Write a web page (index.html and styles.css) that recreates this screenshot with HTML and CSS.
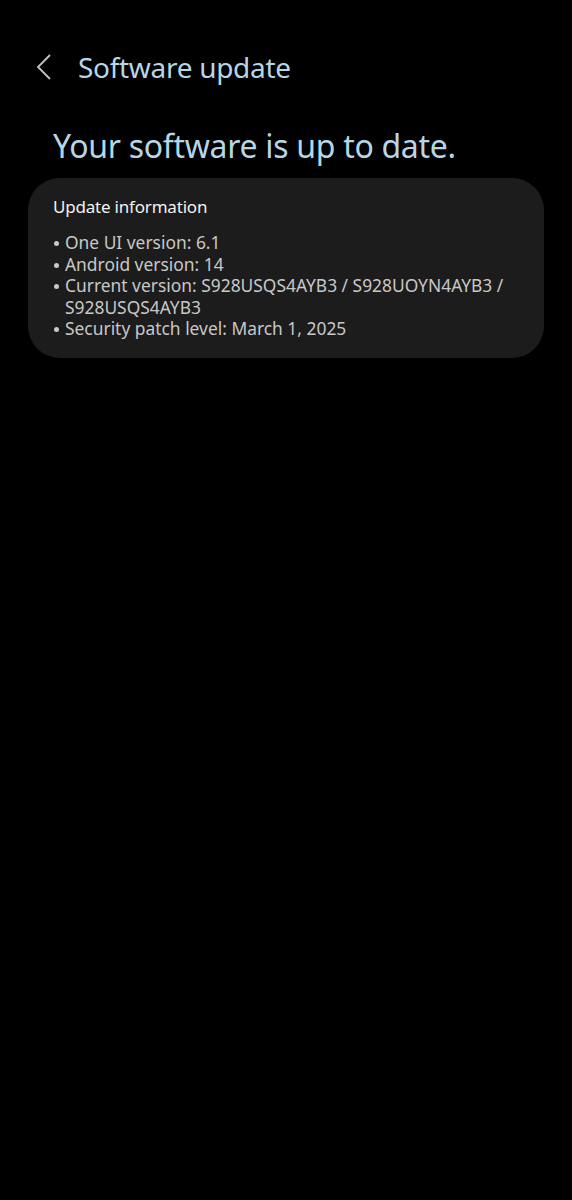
FILE: index.html
```html
<!DOCTYPE html>
<html lang="en">
<head>
  <meta charset="UTF-8">
  <title>Software update</title>
  <link rel="stylesheet" href="styles.css">
</head>
<body>
  <div class="screen">
    <!-- top bar -->
    <div class="topbar">
      <span class="back">
        <svg width="16" height="26" viewBox="0 0 16 26">
          <path d="M14 1 L2 13 L14 25" fill="none" stroke="#c4c4c4" stroke-width="1.8"/>
        </svg>
      </span>
      <h1>Software update</h1>
    </div>

    <h2 class="status">Your software is up to date.</h2>

    <div class="card">
      <h3>Update information</h3>
      <ul>
        <li>One UI version: 6.1</li>
        <li>Android version: 14</li>
        <li>Current version: S928USQS4AYB3 / S928UOYN4AYB3 / S928USQS4AYB3</li>
        <li>Security patch level: March 1, 2025</li>
      </ul>
    </div>
  </div>
</body>
</html>
```

FILE: styles.css
```css
body {
  margin: 0;
  padding: 0;
  background: #000;
  font-family: "Noto Sans", "Open Sans", sans-serif;
}

.screen {
  width: 572px;
  height: 1200px;
  box-sizing: border-box;
  padding: 45px 28px 0 28px;
}

.topbar {
  display: flex;
  align-items: center;
  height: 44px;
}

.back {
  display: flex;
  margin-left: 8px;
  width: 42px;
}

.topbar h1 {
  margin: 0;
  font-size: 28px;
  font-weight: 400;
  color: #b6d6e6;
  letter-spacing: -0.3px;
}

.status {
  margin: 35px 0 0 25px;
  font-size: 32px;
  font-weight: 400;
  color: #b6d6e6;
  letter-spacing: -0.3px;
  line-height: 44px;
}

.card {
  margin-top: 10px;
  background: #1c1c1c;
  border-radius: 32px;
  padding: 17px 25px 18px 25px;
}

.card h3 {
  margin: 0 0 13px 0;
  font-size: 17px;
  font-weight: 400;
  color: #f2f2f2;
  line-height: 24px;
  letter-spacing: -0.2px;
}

.card ul {
  margin: 0;
  padding: 0;
  list-style: none;
}

.card li {
  position: relative;
  padding-left: 12px;
  font-size: 17.4px;
  line-height: 21.5px;
  color: #c8c8c8;
}

.card li::before {
  content: "";
  position: absolute;
  left: 1px;
  top: 9px;
  width: 5px;
  height: 5px;
  border-radius: 50%;
  background: #c8c8c8;
}
```
